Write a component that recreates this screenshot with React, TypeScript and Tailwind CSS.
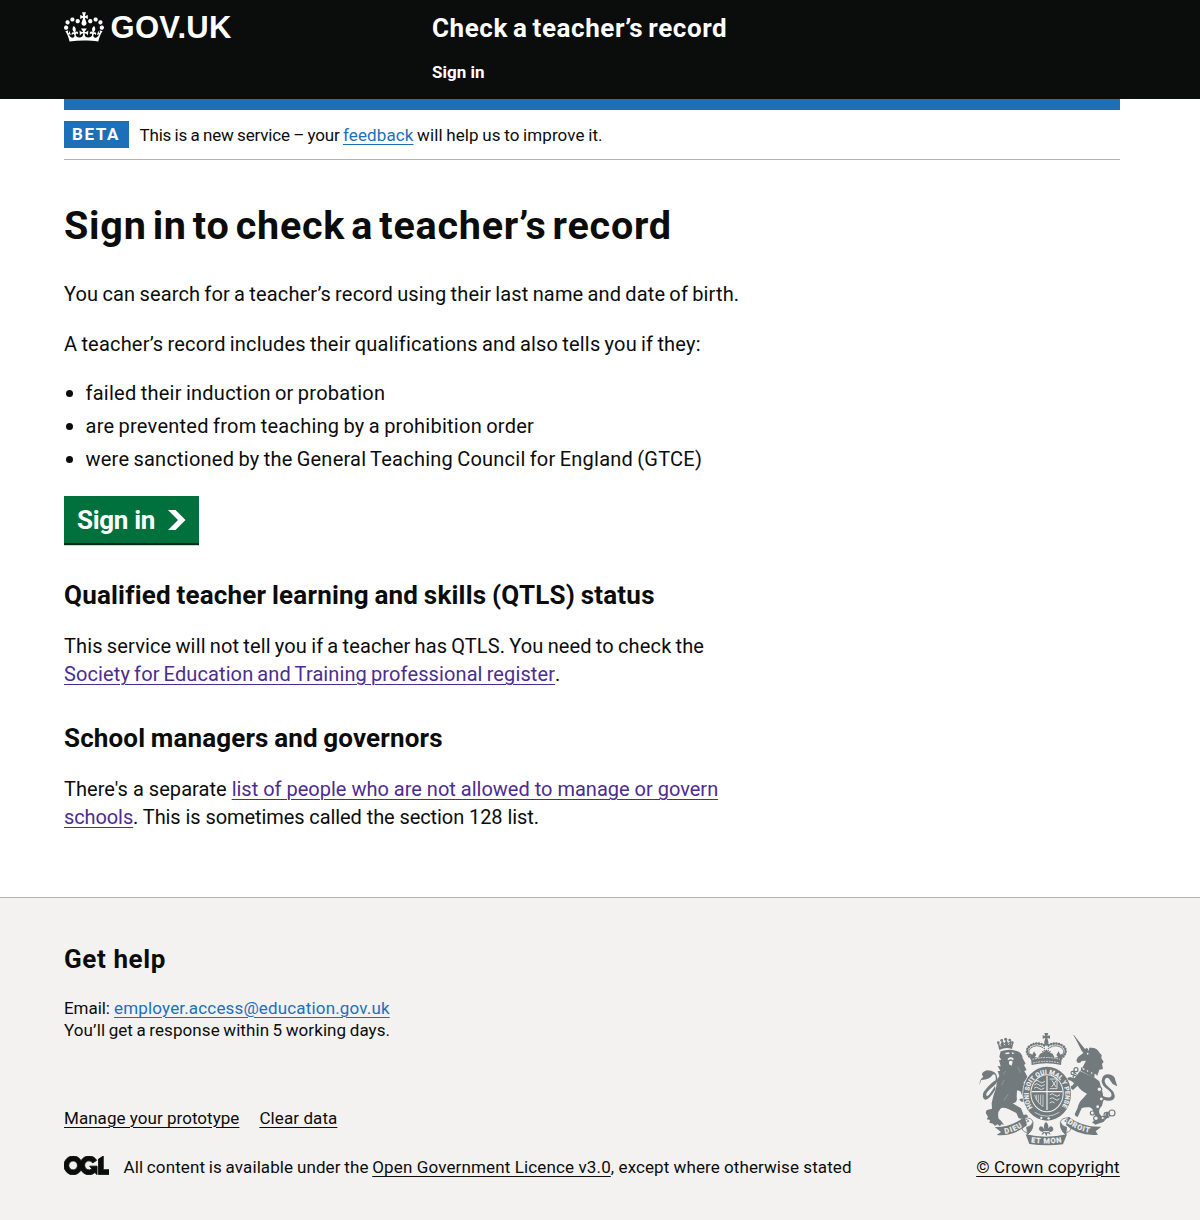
import React from 'react';

const link = 'underline decoration-1 underline-offset-[3px]';

function Crown() {
  return (
    <svg aria-hidden="true" viewBox="0 0 132 97" className="block h-[30px] w-[40px] fill-current">
      <path
        fillRule="evenodd"
        d="M25 30.2c3.5 1.5 7.7-.2 9.1-3.7 1.5-3.6-.2-7.8-3.9-9.2-3.6-1.4-7.6.3-9.1 3.9-1.4 3.5.3 7.5 3.9 9zM9 39.5c3.6 1.5 7.8-.2 9.2-3.7 1.5-3.6-.2-7.8-3.9-9.1-3.6-1.5-7.6.2-9.1 3.8-1.4 3.5.3 7.5 3.8 9zM4.4 57.2c3.5 1.5 7.7-.2 9.1-3.8 1.5-3.6-.2-7.7-3.9-9.1-3.5-1.5-7.6.3-9.1 3.8-1.4 3.5.3 7.6 3.9 9.1zm38.3-21.4c3.5 1.5 7.7-.2 9.1-3.8 1.5-3.6-.2-7.7-3.9-9.1-3.6-1.5-7.6.3-9.1 3.8-1.3 3.6.4 7.7 3.9 9.1zm64.4-5.6c-3.6 1.5-7.8-.2-9.1-3.7-1.5-3.6.2-7.8 3.8-9.2 3.6-1.4 7.7.3 9.2 3.9 1.3 3.5-.4 7.5-3.9 9zm15.9 9.3c-3.6 1.5-7.7-.2-9.1-3.7-1.5-3.6.2-7.8 3.7-9.1 3.6-1.5 7.7.2 9.2 3.8 1.5 3.5-.3 7.5-3.8 9zm4.7 17.7c-3.6 1.5-7.8-.2-9.2-3.8-1.5-3.6.2-7.7 3.9-9.1 3.6-1.5 7.7.3 9.2 3.8 1.3 3.5-.4 7.6-3.9 9.1zM89.3 35.8c-3.6 1.5-7.8-.2-9.2-3.8-1.4-3.6.2-7.7 3.9-9.1 3.6-1.5 7.7.3 9.2 3.8 1.4 3.6-.3 7.7-3.9 9.1zM69.7 17.7l8.9 4.7V9.3l-8.9 2.8c-.2-.3-.5-.6-.9-.9L72.4 0H59.6l3.5 11.2c-.3.3-.6.5-.9.9l-8.8-2.8v13.1l8.8-4.7c.3.3.6.7.9.9l-5 15.4v.1c-.2.8-.4 1.6-.4 2.4 0 4.1 3.1 7.5 7 8.1h.2c.3 0 .7.1 1 .1.4 0 .7 0 1-.1h.2c4-.6 7.1-4.1 7.1-8.1 0-.8-.1-1.7-.4-2.4V34l-5.1-15.4c.4-.2.7-.6 1-.9zM66 92.8c16.9 0 32.8 1.1 47.1 3.2 4-16.9 8.9-26.7 14-33.5l-9.6-3.4c1 4.9 1.1 7.2 0 10.2-1.5-1.4-3-4.3-4.2-8.7L108.6 76c2.8-2 5-3.2 7.5-3.3-4.4 9.4-10 11.9-13.6 11.2-4.3-.8-6.3-4.6-5.6-7.9 1-4.7 5.7-5.9 8-.5 4.3-8.7-3-11.4-7.6-8.8 7.1-7.2 7.9-13.5 2.1-21.1-8 6.1-8.1 12.3-4.5 20.8-4.7-5.4-12.1-2.5-9.5 6.2 3.4-5.2 7.9-2 7.2 3.1-.6 4.3-6.4 7.8-13.5 7.2-10.3-.9-10.9-8-11.2-13.8 2.5-.5 7.1 1.8 11 7.3L80.2 60c-4.1 4.4-8 5.3-12.3 5.4 1.4-4.4 8-11.6 8-11.6H55.5s6.4 7.2 7.9 11.6c-4.2-.1-8-1-12.3-5.4l1.4 16.4c3.9-5.5 8.5-7.7 10.9-7.3-.3 5.8-.9 12.8-11.1 13.8-7.2.6-12.9-2.9-13.5-7.2-.7-5 3.8-8.3 7.1-3.1 2.7-8.7-4.6-11.6-9.4-6.2 3.7-8.5 3.6-14.7-4.6-20.8-5.8 7.6-5 13.9 2.2 21.1-4.7-2.6-11.9.1-7.7 8.8 2.3-5.5 7.1-4.2 8.1.5.7 3.3-1.3 7.1-5.7 7.9-3.5.7-9-1.8-13.5-11.2 2.5.1 4.7 1.3 7.5 3.3l-4.7-15.4c-1.2 4.4-2.7 7.2-4.3 8.7-1.1-3-.9-5.3 0-10.2l-9.5 3.4c5 6.9 9.9 16.7 14 33.5 14.8-2.1 30.8-3.2 47.7-3.2z"
      />
    </svg>
  );
}

function OglLogo() {
  return (
    <svg aria-hidden="true" viewBox="0 0 483.2 195.7" preserveAspectRatio="none" className="block h-[18.8px] w-[45px] shrink-0 fill-current stroke-current" strokeWidth="9">
      <path d="M421.5 142.8V.1l-50.7 32.3v161.1h112.4v-50.7zm-122.3-9.6A47.12 47.12 0 0 1 221 97.8c0-26 21.1-47.1 47.1-47.1 16.7 0 31.4 8.7 39.7 21.8l42.7-27.2A97.63 97.63 0 0 0 268.1 0c-36.5 0-68.3 20.1-85.1 49.7A98 98 0 0 0 97.8 0C43.9 0 0 43.9 0 97.8s43.9 97.8 97.8 97.8c36.5 0 68.3-20.1 85.1-49.7a97.76 97.76 0 0 0 149.6 25.4l19.4 22.2h3v-87.8h-80l24.3 27.5zM97.8 145c-26 0-47.1-21.1-47.1-47.1s21.1-47.1 47.1-47.1 47.1 21.1 47.1 47.1S123.8 145 97.8 145" />
    </svg>
  );
}

const INK = '#727a7d';
const PAPER = '#f3f2f1';

function RoyalArms() {
  return (
    <svg aria-hidden="true" viewBox="51 33 426 348" className="block h-[116px] w-[142px]" fill={INK} fontFamily="Roboto, sans-serif" fontWeight="700">
      {/* lion */}
      <g>
        <path d="M118 90L113 70L121 75L126 62L134 70L139 58L144 69L154 61L153 74L160 69L156 87Q137 80 118 90Z" />
        <circle cx="115" cy="68" r="4" /><circle cx="125" cy="61" r="4" /><circle cx="137" cy="58" r="4.5" /><circle cx="149" cy="60" r="4" /><circle cx="157" cy="68" r="4" />
        <path d="M119 76l5 3M131 72l5 3M144 74l5-3" stroke={PAPER} strokeWidth="2.5" />
        <path d="M122 94Q145 86 167 92Q187 97 188 115L197 131L192 135L200 150L193 153L203 172L190 189L207 205L209 231L198 226L201 243Q181 250 178 237L190 235L181 214L171 211L170 231Q174 247 158 250L183 265L191 285Q202 280 204 290Q190 299 176 295L169 279L145 267Q125 260 121 267Q111 277 116 296Q126 302 132 315L124 313L120 319L112 313L105 318L99 311L88 308L90 300L80 298L84 291L79 282Q75 276 81 270L96 266L95 249Q100 224 108 205L111 180L118 168L113 153L121 153L113 138L122 139L117 121L124 119L118 110Z" />
        <path d="M107 207Q83 247 72 237Q62 224 78 207Q98 184 107 181Q109 158 98 164Q90 178 64 180L58 195Q60 176 70 170Q58 160 80 151Q112 151 113 178Q113 190 93 205Q74 221 80 228Q86 230 105 198Z" />
        <path d="M134 99l13-2 2 4-10 2zM155 97l9 2-7 4zM143 116q10-8 18 0l-2 5q-7-6-15 0zM147 124q7-4 11 1l-3 12-8-4z" fill={PAPER} />
        <path d="M137 153l-7 10M173 140l9 18M132 180l-7 15M145 222l-14 20" stroke={PAPER} strokeWidth="2" opacity=".35" />
      </g>

      {/* unicorn */}
      <g>
        <path d="M341 45L375 87L381 83L387 93Q386 81 392 83Q411 82 419 99L425 105L424 115L431 125L426 132L429 147L418 149L412 167L367 143L378 122L365 123Q360 132 351 127Q347 119 354 111L370 99L364 91Z" />
        <path d="M341 45L370 89" stroke={INK} strokeWidth="2" />
        <circle cx="383" cy="101" r="2.5" fill={PAPER} />
        <path d="M365 144L410 164L404 173L360 151Z" fill={PAPER} />
        <path d="M362 152L364 140L371 151L378 143L382 156L391 149L394 162L404 156L403 174Z" />
        <path d="M360 153L405 174L418 184L425 207Q434 236 426 257Q415 267 418 280L432 300L438 279L446 274L444 291L430 306L406 314L396 307L409 298L402 278Q399 266 390 262Q373 260 365 265L353 291Q345 290 344 283L353 263Q356 246 370 234L381 221Q360 211 353 197L339 210L323 199L335 202L342 189L330 181L314 184L317 175L332 171L343 177L351 165Z" />
        <path d="M351 166Q333 155 340 151L349 161ZM345 194L323 216L319 208L335 197Z" />
        <path d="M423 225Q448 239 454 228Q458 218 438 205Q420 191 427 174Q431 162 446 163Q465 166 466 181L472 199L458 192L446 175Q437 169 434 181Q433 192 448 203Q469 220 463 235Q454 249 426 237Z" />
        <g fill="none" stroke={INK} strokeWidth="3.5">
          <circle cx="348" cy="149" r="6" /><circle cx="338" cy="159" r="5" /><circle cx="344" cy="171" r="5" />
          <circle cx="418" cy="208" r="7" fill={PAPER} /><circle cx="424" cy="237" r="6" fill={PAPER} /><circle cx="413" cy="260" r="6" fill={PAPER} />
          <circle cx="397" cy="279" r="6" fill={PAPER} /><circle cx="408" cy="295" r="7" fill={PAPER} /><circle cx="428" cy="294" r="5" fill={PAPER} /><circle cx="440" cy="285" r="8" /><circle cx="456" cy="279" r="9" />
        </g>
      </g>

      {/* crown */}
      <g>
        <path d="M253 39h12l-3 9 8-2v10l-8-2 4 14h-14l4-14-8 2V46l8 2z" />
        <circle cx="259" cy="71" r="6" />
        <g fill="none" stroke={INK} strokeLinecap="round">
          <path d="M214 115Q192 96 207 80Q229 62 257 78M304 115Q326 96 311 80Q289 62 261 78" strokeWidth="8" strokeDasharray=".1 8" />
          <path d="M217 116Q199 98 211 85Q230 70 249 83M301 116Q319 98 307 85Q288 70 269 83" strokeWidth="3" />
          <path d="M253 79v24M265 79v24" strokeWidth="4" strokeDasharray=".1 6" />
        </g>
        <path d="M213 116L209 100L217 104L222 94L229 105L224 111L234 113L240 101L248 98L245 92L253 95L259 88L265 95L273 92L270 98L278 101L284 113L294 111L289 105L296 94L301 104L309 100L305 116L303 135Q259 124 215 135Z" />
        <path d="M218 118Q259 107 300 118M219 129Q259 119 299 129" fill="none" stroke={PAPER} strokeWidth="2.5" strokeDasharray="5 3" />
      </g>

      {/* garter and shield */}
      <ellipse cx="261" cy="221" rx="74" ry="83" fill={PAPER} />
      <ellipse cx="261" cy="221" rx="72" ry="81" />
      <ellipse cx="261" cy="220" rx="50" ry="57" fill={PAPER} />
      <ellipse cx="261" cy="220" rx="47" ry="54" />
      <path id="garter" d="M218 263A55 62 0 1 1 304 263" fill="none" />
      <text fontSize="19" fill={PAPER} stroke={PAPER} strokeWidth=".4">
        <textPath href="#garter" textLength="262" lengthAdjust="spacing">HONI SOIT QUI MAL Y PENSE</textPath>
      </text>
      <g fill="none" stroke={PAPER} strokeWidth="2.5">
        <path d="M261 168v102M215 215h92" strokeWidth="3.5" />
        <path d="M224 185q7-8 14 0t17-1M223 195q7-8 14 0t17-1M222 205q7-8 14 0t17-1M269 177h22v29h-22M276 181l12 20M289 181l-14 20M269 225q8-8 15 0t16-1M269 237q8-8 15 0t14-1M269 249q8-8 15 0" />
        <path d="M224 225q8 25 25 34M249 224v36M242 224v28M235 224v22M229 224v15" strokeWidth="2" />
        <path d="M224 277Q260 300 298 277" strokeWidth="2" />
      </g>
      <circle cx="244" cy="294" r="3.5" fill={PAPER} /><circle cx="266" cy="295" r="3.5" fill={PAPER} />

      {/* fleur-de-lis */}
      <path d="M258 305q12 12 4 25 9-18 17-7 4 10-8 13l-3 1 4 8q-7-4-9-7l-4 11-5-11q-5 5-10 7l5-9q-13-2-12-12 6-12 17 5-6-14 4-24z" />
      <path d="M250 335h18" stroke={PAPER} strokeWidth="3" />

      {/* motto ribbon */}
      <g stroke={INK} strokeWidth="2.5">
        <path d="M190 293Q218 292 219 308Q220 330 203 343L199 337Q184 334 187 318Q193 306 207 303Z" fill={PAPER} />
        <path d="M329 293Q302 293 301 308Q300 330 317 343L320 337Q334 335 333 319Q328 307 314 303Z" fill={PAPER} />
        <path d="M200 322Q215 318 218 308L217 323Q213 336 203 343ZM320 322Q305 318 302 308L303 323Q307 336 317 343Z" />
      </g>
      <path d="M104 321Q153 322 194 290L201 316Q159 350 110 345L123 336Z" />
      <path d="M325 290Q367 322 424 320L407 334L414 344Q355 349 318 315Z" />
      <path d="M197 343Q258 357 321 343L309 373Q259 379 208 372Z" />
      <path id="dieu" d="M135 341Q166 336 194 315" fill="none" />
      <path id="droit" d="M321 308Q351 333 395 339" fill="none" />
      <path id="mon" d="M213 367Q260 374 308 366" fill="none" />
      <g fontSize="22" fill={PAPER} stroke={PAPER} strokeWidth=".5">
        <text><textPath href="#dieu" textLength="57" lengthAdjust="spacing">DIEU</textPath></text>
        <text><textPath href="#droit" textLength="74" lengthAdjust="spacing">DROIT</textPath></text>
        <text><textPath href="#mon" textLength="92" lengthAdjust="spacing">ET MON</textPath></text>
      </g>
    </svg>
  );
}

export default function App() {
  return (
    <div className="flex min-h-[1220px] flex-col bg-white font-['Roboto',sans-serif] text-[20px] leading-[28px] text-[#0b0c0c]">
      <header className="h-[99px] bg-[#0b0c0c] text-white">
        <div className="ml-16 flex w-[1056px] pt-3">
          <a className="flex w-[368px] shrink-0 items-start" href="#">
            <Crown />
            <span className="ml-[6.5px] font-['Liberation_Sans',sans-serif] text-[31px] leading-[32px] font-bold tracking-[0.3px]">GOV.UK</span>
          </a>
          <div>
            <div className="text-[26px] leading-[33px] font-bold tracking-[0.58px] [word-spacing:-2px]">Check a teacher’s record</div>
            <nav className="mt-4 text-[17px] leading-[22px] font-bold">
              <a href="#">Sign in</a>
            </nav>
          </div>
        </div>
      </header>

      <div className="ml-16 w-[1056px]">
        <div className="h-[11px] bg-[#1d70b8]" />
        <div className="flex h-[50px] items-start border-b border-[#b1b4b6] pt-[11px]">
          <strong className="h-[27px] w-[65px] bg-[#1d70b8] pl-2 text-[17px] leading-[27px] font-bold tracking-[1.6px] text-white">BETA</strong>
          <span className="mt-[3px] ml-[10.5px] text-[17px] leading-[22px] whitespace-pre">
            <span className="tracking-[-0.19px] [word-spacing:-0.6px]">This is a new service – your </span>
            <a href="#" className={`${link} tracking-[0.11px] text-[#1d70b8]`}>feedback</a>
            <span className="tracking-[0.09px] [word-spacing:-0.7px]"> will help us to improve it.</span>
          </span>
        </div>

        <main className="pt-11 whitespace-nowrap">
          <h1 className="text-[39.5px] leading-[44px] font-bold tracking-[0.77px] [word-spacing:-4.5px]">Sign in to check a teacher’s record</h1>
          <p className="mt-8 tracking-[0.16px] [word-spacing:-1px]">You can search for a teacher’s record using their last name and date of birth.</p>
          <p className="mt-[22px] tracking-[0.19px] [word-spacing:-1px]">A teacher’s record includes their qualifications and also tells you if they:</p>
          <ul className="mt-[21px] flex flex-col gap-[5px]">
            <li className="flex items-center tracking-[0.25px] [word-spacing:-1px]"><i className="mt-px mr-[12.5px] ml-[2px] size-[7px] rounded-full bg-current" />failed their induction or probation</li>
            <li className="flex items-center tracking-[0.25px] [word-spacing:-1px]"><i className="mt-px mr-[12.5px] ml-[2px] size-[7px] rounded-full bg-current" />are prevented from teaching by a prohibition order</li>
            <li className="flex items-center tracking-[0.23px] [word-spacing:-1px]"><i className="mt-px mr-[12.5px] ml-[2px] size-[7px] rounded-full bg-current" />were sanctioned by the General Teaching Council for England (GTCE)</li>
          </ul>
          <a href="#" className="mt-[23px] flex h-[47px] w-[135px] items-center bg-[#00703c] pt-px pl-[13px] text-[26px] leading-[33px] font-bold tracking-[-0.3px] text-white shadow-[0_2.2px_0_#002d18]">
            Sign in
            <svg aria-hidden="true" viewBox="0 0 35 40" preserveAspectRatio="none" className="ml-[13px] h-[20px] w-[17.5px] fill-current">
              <path d="M0 0h15l20 20-20 20H0l20-20z" />
            </svg>
          </a>
          <h2 className="mt-9 text-[26px] leading-[33px] font-bold tracking-[0.2px] [word-spacing:-1px]">Qualified teacher learning and skills (QTLS) status</h2>
          <p className="mt-5">
            <span className="tracking-[0.145px] [word-spacing:-1px]">This service will not tell you if a teacher has QTLS. You need to check the</span>
            <br />
            <a href="#" className={`${link} tracking-[0.11px] [word-spacing:-1px] text-[#4c2c92]`}>Society for Education and Training professional register</a>.
          </p>
          <h2 className="mt-[34px] text-[26px] leading-[33px] font-bold tracking-[0.14px] [word-spacing:-1px]">School managers and governors</h2>
          <p className="mt-5">
            <span className="tracking-[0.04px]">There's a separate </span>
            <a href="#" className={`${link} text-[#4c2c92]`}>
              <span>list of people who are not allowed to manage or govern</span>
              <br />
              <span className="tracking-[-0.1px]">schools</span>
            </a>
            <span className="tracking-[-0.08px]">. This is sometimes called the section 128 list.</span>
          </p>
        </main>
      </div>

      <footer className="mt-[66px] flex-1 border-t border-[#b1b4b6] bg-[#f3f2f1] text-[17px] leading-[22px] whitespace-nowrap">
        <div className="ml-16 flex w-[1056px] items-end justify-between pt-[45px]">
          <div>
            <h2 className="text-[26px] leading-[33px] font-bold tracking-[0.6px]">Get help</h2>
            <p className="mt-[21px]">
              <span className="tracking-[-0.05px]">Email: </span>
              <a href="#" className={`${link} tracking-[0.16px] text-[#1d70b8]`}>employer.access@education.gov.uk</a>
              <br />
              <span className="tracking-[0.08px] [word-spacing:-0.8px]">You’ll get a response within 5 working days.</span>
            </p>
            <ul className="mt-[66px] flex gap-5">
              <li><a href="#" className={`${link} tracking-[0.04px]`}>Manage your prototype</a></li>
              <li><a href="#" className={`${link} tracking-[0.09px]`}>Clear data</a></li>
            </ul>
            <div className="mt-[27px] flex items-start">
              <OglLogo />
              <span className="ml-[14.5px]">
                <span className="tracking-[0.1px] [word-spacing:-0.6px]">All content is available under the </span>
                <a href="#" className={`${link} tracking-[0.13px]`}>Open Government Licence v3.0</a>
                <span className="tracking-[0.08px]">, except where otherwise stated</span>
              </span>
            </div>
          </div>
          <a href="#" className="flex w-36 flex-col items-center">
            <RoyalArms />
            <span className={`${link} mt-[9px] tracking-[0.17px]`}>© Crown copyright</span>
          </a>
        </div>
      </footer>
    </div>
  );
}
